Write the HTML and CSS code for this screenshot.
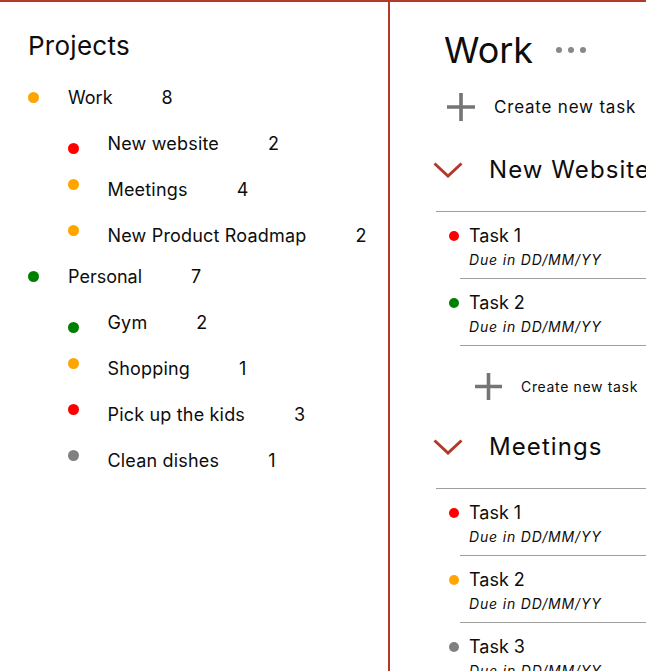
FILE: index.html
```html
<!DOCTYPE html>
<html lang="en">
<head>
<meta charset="utf-8">
<title>Projects</title>
<link rel="stylesheet" href="styles.css">
</head>
<body>
<div class="app">
  <aside class="sidebar">
    <h2 class="sidebar-title">Projects</h2>
    <ul class="projects">
      <li class="group">
        <div class="project parent"><span class="dot orange"></span><span class="name">Work</span><span class="count">8</span></div>
        <ul class="subprojects">
          <li class="project child"><span class="dot red dot-low"></span><span class="name">New website</span><span class="count">2</span></li>
          <li class="project child"><span class="dot orange dot-high"></span><span class="name">Meetings</span><span class="count">4</span></li>
          <li class="project child"><span class="dot orange dot-high"></span><span class="name">New Product Roadmap</span><span class="count">2</span></li>
        </ul>
      </li>
      <li class="group">
        <div class="project parent"><span class="dot green"></span><span class="name">Personal</span><span class="count">7</span></div>
        <ul class="subprojects">
          <li class="project child"><span class="dot green dot-low"></span><span class="name">Gym</span><span class="count">2</span></li>
          <li class="project child"><span class="dot orange dot-high"></span><span class="name">Shopping</span><span class="count">1</span></li>
          <li class="project child"><span class="dot red dot-high"></span><span class="name">Pick up the kids</span><span class="count">3</span></li>
          <li class="project child"><span class="dot gray dot-high"></span><span class="name">Clean dishes</span><span class="count">1</span></li>
        </ul>
      </li>
    </ul>
  </aside>

  <main class="main">
    <div class="page-head">
      <h1 class="page-title">Work</h1>
      <span class="more" aria-label="More"><i></i><i></i><i></i></span>
    </div>

    <div class="create create-big">
      <svg class="plus" width="30" height="30" viewBox="0 0 30 30" aria-hidden="true"><path d="M15 1v28M1 15h28"/></svg>
      <span>Create new task</span>
    </div>

    <section class="section">
      <div class="section-head">
        <svg class="chevron" width="30" height="16" viewBox="0 0 30 16" aria-hidden="true"><path d="M1.5 1.5 15 14 28.5 1.5"/></svg>
        <h3 class="section-title">New Website</h3>
      </div>
      <ul class="tasks">
        <li class="task"><span class="tdot red"></span><div class="task-body"><div class="task-title">Task 1</div><div class="task-due">Due in DD/MM/YY</div></div></li>
        <li class="task"><span class="tdot green"></span><div class="task-body"><div class="task-title">Task 2</div><div class="task-due">Due in DD/MM/YY</div></div></li>
      </ul>
      <div class="create create-small">
        <svg class="plus" width="29" height="29" viewBox="0 0 29 29" aria-hidden="true"><path d="M14.5 1v27M1 14.5h27"/></svg>
        <span>Create new task</span>
      </div>
    </section>

    <section class="section section-2">
      <div class="section-head">
        <svg class="chevron" width="30" height="16" viewBox="0 0 30 16" aria-hidden="true"><path d="M1.5 1.5 15 14 28.5 1.5"/></svg>
        <h3 class="section-title">Meetings</h3>
      </div>
      <ul class="tasks">
        <li class="task"><span class="tdot red"></span><div class="task-body"><div class="task-title">Task 1</div><div class="task-due">Due in DD/MM/YY</div></div></li>
        <li class="task"><span class="tdot orange"></span><div class="task-body"><div class="task-title">Task 2</div><div class="task-due">Due in DD/MM/YY</div></div></li>
        <li class="task"><span class="tdot gray"></span><div class="task-body"><div class="task-title">Task 3</div><div class="task-due">Due in DD/MM/YY</div></div></li>
      </ul>
    </section>
  </main>
</div>
</body>
</html>
```

FILE: styles.css
```css
* { box-sizing: border-box; }

html, body {
  margin: 0;
  padding: 0;
  height: 100%;
  overflow: hidden;
  background: #fff;
}

body {
  font-family: Inter, "Liberation Sans", sans-serif;
  color: #0d0d0d;
}

ul { list-style: none; margin: 0; padding: 0; }
h1, h2, h3 { margin: 0; font-weight: 400; }

svg { flex: none; display: block; }

.app {
  display: grid;
  grid-template-columns: 390px 1fr;
  height: 100vh;
  border-top: 2px solid #b13a2b;
}

/* Sidebar */
.sidebar {
  border-right: 2px solid #b13a2b;
  padding-top: 29px;
}

.sidebar-title {
  font-size: 26px;
  line-height: 30px;
  padding-left: 28px;
  letter-spacing: 0.01em;
  margin-bottom: 18px;
}

.project {
  display: flex;
  align-items: center;
  font-size: 18px;
  white-space: nowrap;
}

.parent {
  height: 36px;
  padding-left: 28px;
  margin-bottom: 5px;
}

.child {
  height: 46px;
  padding-left: 68px;
}

.child .name { letter-spacing: 0.01em; }

.dot {
  width: 11px;
  height: 11px;
  border-radius: 50%;
  flex: none;
  margin-right: 29px;
}

.child .dot { margin-left: -0.5px; }

.dot-low { margin-top: 10px; }
.dot-high { margin-top: -9px; }

.count { margin-left: 49px; }

.orange { background: #ffa500; }
.red { background: #ff0000; }
.green { background: #008000; }
.gray { background: #808080; }

/* Main */
.main {
  padding: 28px 0 0 43px;
  overflow: hidden;
  white-space: nowrap;
}

.page-head {
  display: flex;
  align-items: center;
  height: 40px;
  padding-left: 11px;
}

.page-title {
  font-size: 36px;
  line-height: 40px;
}

.more {
  display: flex;
  gap: 6px;
  margin-left: 23px;
}

.more i {
  width: 6px;
  height: 6px;
  border-radius: 50%;
  background: #888;
}

.create {
  display: flex;
  align-items: center;
  letter-spacing: 0.047em;
}

.plus path {
  fill: none;
  stroke: #757575;
  stroke-width: 3.6;
}

.create-big {
  height: 30px;
  margin-top: 22px;
  padding-left: 13px;
  gap: 18px;
  font-size: 17px;
}

.create-small {
  height: 29px;
  margin-top: 26px;
  padding-left: 41px;
  gap: 18px;
  font-size: 14px;
}

.section { margin-top: 33px; }
.section-2 { margin-top: 31px; }

.section-head {
  display: flex;
  align-items: center;
  height: 30px;
  gap: 26px;
}

.chevron path {
  fill: none;
  stroke: #b13a2b;
  stroke-width: 3;
}

.section-title {
  flex: none;
  font-size: 24px;
  line-height: 30px;
  letter-spacing: 0.045em;
}

.tasks {
  margin-top: 26px;
  margin-left: 3px;
  border-top: 1px solid #9e9e9e;
}

.task {
  display: flex;
  align-items: flex-start;
  margin-left: 24px;
  padding: 12px 0 6px;
  border-bottom: 1px solid #9e9e9e;
}

.tdot {
  flex: none;
  width: 10px;
  height: 10px;
  border-radius: 50%;
  margin: 7px 10px 0 -11px;
}

.task-title {
  font-size: 18px;
  line-height: 24px;
}

.task-due {
  font-size: 14px;
  line-height: 24px;
  font-style: italic;
  letter-spacing: 0.06em;
}
```
